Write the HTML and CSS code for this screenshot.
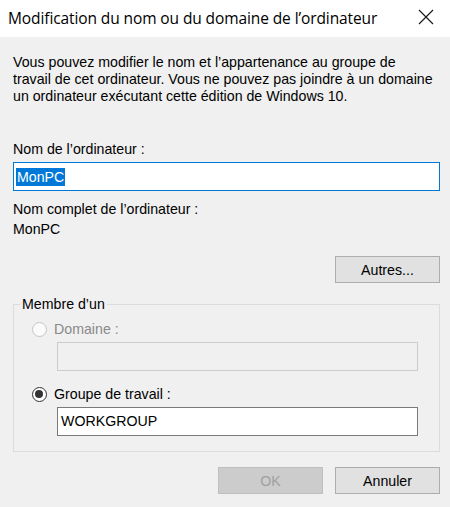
FILE: index.html
```html
<!DOCTYPE html>
<html lang="fr">
<head>
<meta charset="utf-8">
<title>Modification du nom</title>
<link rel="stylesheet" href="styles.css">
</head>
<body>
<div class="dialog">
  <div class="titlebar">
    <span class="title">Modification du nom ou du domaine de l’ordinateur</span>
    <svg class="close" width="16" height="16" viewBox="0 0 16 16"><path d="M1 1 L15 15 M15 1 L1 15" stroke="#1a1a1a" stroke-width="1.2" fill="none"/></svg>
  </div>
  <div class="content">
    <p class="intro">Vous pouvez modifier le nom et l’appartenance au groupe de<br>travail de cet ordinateur. Vous ne pouvez pas joindre à un domaine<br>un ordinateur exécutant cette édition de Windows 10.</p>
    <div class="label lbl-name">Nom de l’ordinateur :</div>
    <div class="input focused"><span class="sel">MonPC</span></div>
    <div class="label lbl-full">Nom complet de l’ordinateur :</div>
    <div class="label lbl-val">MonPC</div>
    <div class="btnrow first"><button class="btn">Autres...</button></div>
    <fieldset class="group">
      <legend>Membre d’un</legend>
      <div class="radiorow disabled"><span class="radio"></span><span>Domaine :</span></div>
      <div class="input sub disabled-input"></div>
      <div class="radiorow second"><span class="radio checked"></span><span>Groupe de travail :</span></div>
      <div class="input sub">WORKGROUP</div>
    </fieldset>
    <div class="btnrow last">
      <button class="btn off">OK</button>
      <button class="btn">Annuler</button>
    </div>
  </div>
</div>
</body>
</html>
```
FILE: styles.css
```css
html, body { margin: 0; padding: 0; }
body { width: 450px; height: 507px; overflow: hidden; background: #f0f0f0; font-family: "Liberation Sans", Arial, sans-serif; font-size: 14.2px; color: #000; }
.dialog { width: 450px; height: 507px; display: flex; flex-direction: column; }
.titlebar { height: 37px; background: #fff; display: flex; align-items: center; justify-content: space-between; padding: 0 8px 0 8px; box-sizing: border-box; flex-shrink: 0; }
.title { font-family: "Open Sans", "Segoe UI", sans-serif; font-size: 15.5px; color: #000; margin-top: -2px; letter-spacing: -0.1px; }
.close { margin-right: 8px; margin-top: -3px; }
.content { flex: 1; background: #f0f0f0; padding: 17px 10px 0 13px; }
.intro { margin: 0; line-height: 17px; white-space: nowrap; }
.label { line-height: 17px; }
.lbl-name { margin-top: 36px; }
.input { height: 29px; box-sizing: border-box; border: 1px solid #7a7a7a; background: #fff; line-height: 27px; padding-left: 3px; }
.input.focused { margin-top: 4px; border-color: #0078d7; padding-left: 2px; display: flex; align-items: center; }
.sel { background: #0078d7; color: #fff; line-height: 18px; padding: 0 1px; }
.lbl-full { margin-top: 10px; }
.lbl-val { margin-top: 3px; }
.btnrow { display: flex; justify-content: flex-end; gap: 12px; }
.btnrow.first { margin-top: 18px; }
.btnrow.last { margin-top: 15px; }
.btn { width: 105px; height: 27px; box-sizing: border-box; background: #e1e1e1; border: 1px solid #adadad; font-family: "Liberation Sans", Arial, sans-serif; font-size: 14.2px; color: #000; padding: 0; margin: 0; }
.btn.off { background: #cccccc; border-color: #bfbfbf; color: #a0a0a0; }
.group { margin: 13px 0 0 0; border: 1px solid #dcdcdc; padding: 8px 21px 15px 18px; min-width: 0; }
.group legend { padding: 0 2px; margin-left: -12px; line-height: 17px; }
.radiorow { display: flex; align-items: center; gap: 7px; line-height: 17px; }
.radiorow.disabled { color: #8a8a8a; }
.radiorow.second { margin-top: 15px; }
.radio { width: 15px; height: 15px; box-sizing: border-box; border-radius: 50%; border: 1.5px solid #333; background: #fff; position: relative; flex-shrink: 0; }
.radiorow.disabled .radio { border: 1px solid #c4c4c4; background: #fbfbfb; }
.radio.checked::after { content: ""; position: absolute; left: 2px; top: 2px; width: 8px; height: 8px; border-radius: 50%; background: #333; }
.input.sub { margin-left: 25px; margin-top: 4px; }
.disabled-input { background: #f0f0f0; border-color: #cccccc; }
```
